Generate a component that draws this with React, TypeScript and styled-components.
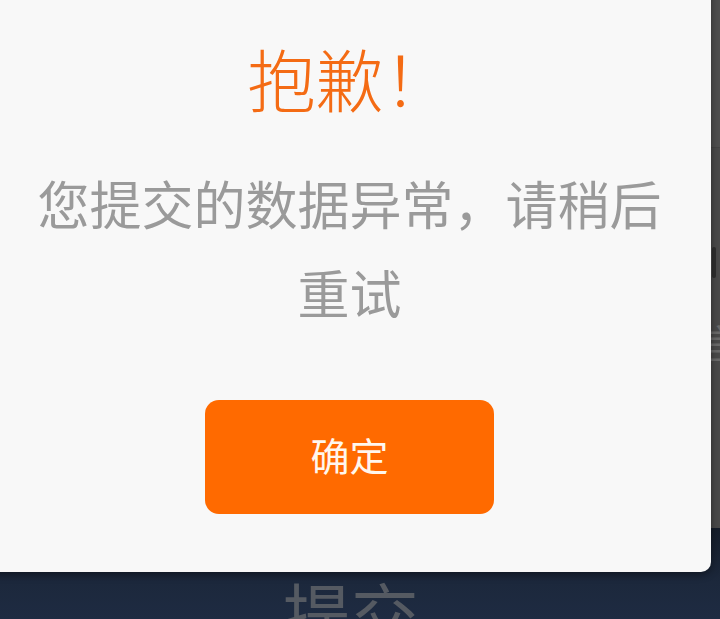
import React from 'react';
import styled, { createGlobalStyle } from 'styled-components';

const GlobalStyle = createGlobalStyle`
  html, body {
    margin: 0;
    padding: 0;
    width: 720px;
    height: 619px;
    overflow: hidden;
    background: #4b4b4b;
  }
  * {
    box-sizing: border-box;
  }
`;

const Screen = styled.div`
  position: relative;
  width: 720px;
  height: 619px;
  overflow: hidden;
  display: flex;
  flex-direction: column;
  font-family: 'Noto Sans CJK SC', 'Noto Sans', sans-serif;
`;

const PageBody = styled.div`
  flex: 1;
  display: flex;
  flex-direction: column;
  align-items: flex-end;
  background: #4a4a4a;
`;

const HeaderStrip = styled.div`
  width: 100%;
  height: 148px;
  background: #4f4f4f;
  border-bottom: 1px solid #444;
`;

const FieldMark = styled.div`
  width: 4px;
  height: 31px;
  margin: 99px 4px 0 0;
  background: #2f2f2f;
  border-radius: 2px;
`;

const FieldText = styled.div`
  margin: 44px -20px 0 0;
  font-size: 40px;
  line-height: 40px;
  color: #6a6a6a;
`;

const SubmitBar = styled.div`
  height: 91px;
  display: flex;
  justify-content: center;
  padding: 44px 18px 0 0;
  background: linear-gradient(180deg, #151d2a 0%, #1c283c 60%, #1e2b42 100%);
  font-size: 68px;
  line-height: 80px;
  color: #555a62;
`;

const Dialog = styled.div`
  position: absolute;
  left: -12px;
  top: -30px;
  width: 723px;
  height: 602px;
  background: #f8f8f8;
  border-radius: 10px;
  box-shadow: 0 2px 8px rgba(0, 0, 0, 0.45);
  display: flex;
  flex-direction: column;
  align-items: center;
  padding-top: 68px;
`;

const Title = styled.h1`
  margin: 0;
  font-size: 68px;
  line-height: 80px;
  font-weight: 300;
  color: #f46b14;
`;

const Message = styled.p`
  margin: 40px 0 0;
  width: 660px;
  text-align: center;
  font-size: 52px;
  line-height: 89px;
  font-weight: 400;
  color: #9a9a9a;
`;

const ConfirmButton = styled.button`
  margin-top: 64px;
  width: 289px;
  height: 114px;
  border: none;
  border-radius: 14px;
  background: #ff6a00;
  color: #fff7ee;
  font-family: inherit;
  font-size: 39px;
  line-height: 1;
  padding: 0 0 6px;
`;

export default function App() {
  return (
    <>
      <GlobalStyle />
      <Screen>
        <PageBody>
          <HeaderStrip />
          <FieldMark />
          <FieldText>言</FieldText>
        </PageBody>
        <SubmitBar>提交</SubmitBar>
        <Dialog>
          <Title>抱歉！</Title>
          <Message>您提交的数据异常，请稍后重试</Message>
          <ConfirmButton>确定</ConfirmButton>
        </Dialog>
      </Screen>
    </>
  );
}
